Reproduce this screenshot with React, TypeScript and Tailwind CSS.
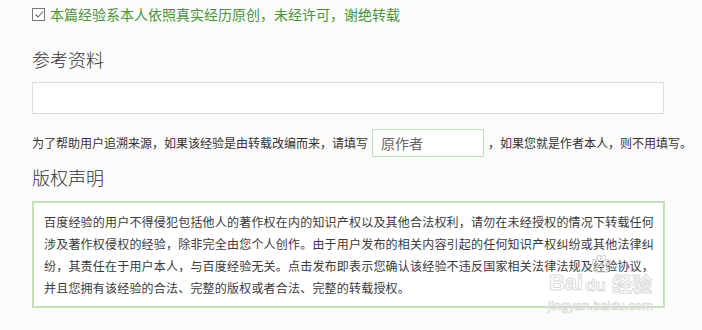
import React from 'react';

const cjk = { fontFamily: '"Noto Sans CJK SC", "Liberation Sans", sans-serif' };

const copyrightLines = [
  '百度经验的用户不得侵犯包括他人的著作权在内的知识产权以及其他合法权利，请勿在未经授权的情况下转载任何',
  '涉及著作权侵权的经验，除非完全由您个人创作。由于用户发布的相关内容引起的任何知识产权纠纷或其他法律纠',
  '纷，其责任在于用户本人，与百度经验无关。点击发布即表示您确认该经验不违反国家相关法律法规及经验协议，',
  '并且您拥有该经验的合法、完整的版权或者合法、完整的转载授权。',
];

export default function App() {
  return (
    <div className="w-[702px] h-[330px] bg-[#fbfbfb] text-[#333] overflow-hidden relative" style={cjk}>
      {/* original notice */}
      <div className="flex items-center pl-[32px] pt-[5px] h-[24px] gap-[5px]">
        <span className="w-[13px] h-[13px] shrink-0 border border-[#777] bg-white flex items-center justify-center">
          <svg width="10" height="9" viewBox="0 0 10 9" fill="none">
            <path d="M1.5 4.5 L4 7 L9 1.5" stroke="#666" strokeWidth="1.1" />
          </svg>
        </span>
        <span className="text-[14px] leading-[19px] text-[#4a9438]">本篇经验系本人依照真实经历原创，未经许可，谢绝转载</span>
      </div>

      {/* references */}
      <div className="pl-[32px]">
        <h2 className="mt-[23px] text-[18px] leading-[24px] font-light text-[#333]">参考资料</h2>
        <div className="mt-[11px] w-[632px] h-[32px] bg-white border border-[#dcdcdc]" />
        <div className="mt-[15px] flex items-center w-max text-[12px] text-[#333] whitespace-nowrap">
          <span>为了帮助用户追溯来源，如果该经验是由转载改编而来，请填写</span>
          <div className="ml-[4px] shrink-0 w-[112px] h-[28px] bg-white border border-[#c4dfbf] flex items-center pl-[8px] text-[14px] text-[#666]">
            原作者
          </div>
          <span className="ml-[4px]">，如果您就是作者本人，则不用填写。</span>
        </div>

        <h2 className="mt-[8px] text-[18px] leading-[24px] font-light text-[#333]">版权声明</h2>
        <div className="mt-[12px] w-[633px] border-2 border-[#c5e0b6] bg-white pl-[10px] pt-[8px] pb-[7px]">
          {copyrightLines.map((line) => (
            <p key={line} className="whitespace-nowrap text-[12px] leading-[22px] tracking-[0.2px] text-[#3a3a3a]">
              {line}
            </p>
          ))}
        </div>
      </div>

      {/* watermark */}
      <div className="absolute left-[537px] top-[254px] w-[127px] flex flex-col items-center pointer-events-none opacity-90">
        <svg width="24" height="20" viewBox="0 0 36 28" fill="none" stroke="#d6d6d6" strokeWidth="2">
          <ellipse cx="8" cy="11" rx="3" ry="4" />
          <ellipse cx="15" cy="5" rx="3" ry="4" />
          <ellipse cx="22" cy="5" rx="3" ry="4" />
          <ellipse cx="29" cy="11" rx="3" ry="4" />
          <path d="M9 24 C9 18 14 14 18.5 14 C23 14 28 18 28 24 C28 27 22 26 18.5 26 C15 26 9 27 9 24 Z" />
        </svg>
        <div className="flex items-end -mt-[2px] leading-none text-[22px] font-bold text-white" style={{ WebkitTextStroke: '1px #d8d8d8', fontFamily: '"Liberation Sans", "Noto Sans CJK SC", sans-serif' }}>
          <span>Bai</span>
          <span className="ml-[2px] text-[17px]">du</span>
          <span className="ml-[6px] text-[20px]" style={cjk}>经验</span>
        </div>
        <div className="mt-[5px] text-[13px] leading-none text-white" style={{ WebkitTextStroke: '0.6px #d0d0d0', fontFamily: '"Liberation Sans", sans-serif' }}>
          jingyan.baidu.com
        </div>
      </div>
    </div>
  );
}
